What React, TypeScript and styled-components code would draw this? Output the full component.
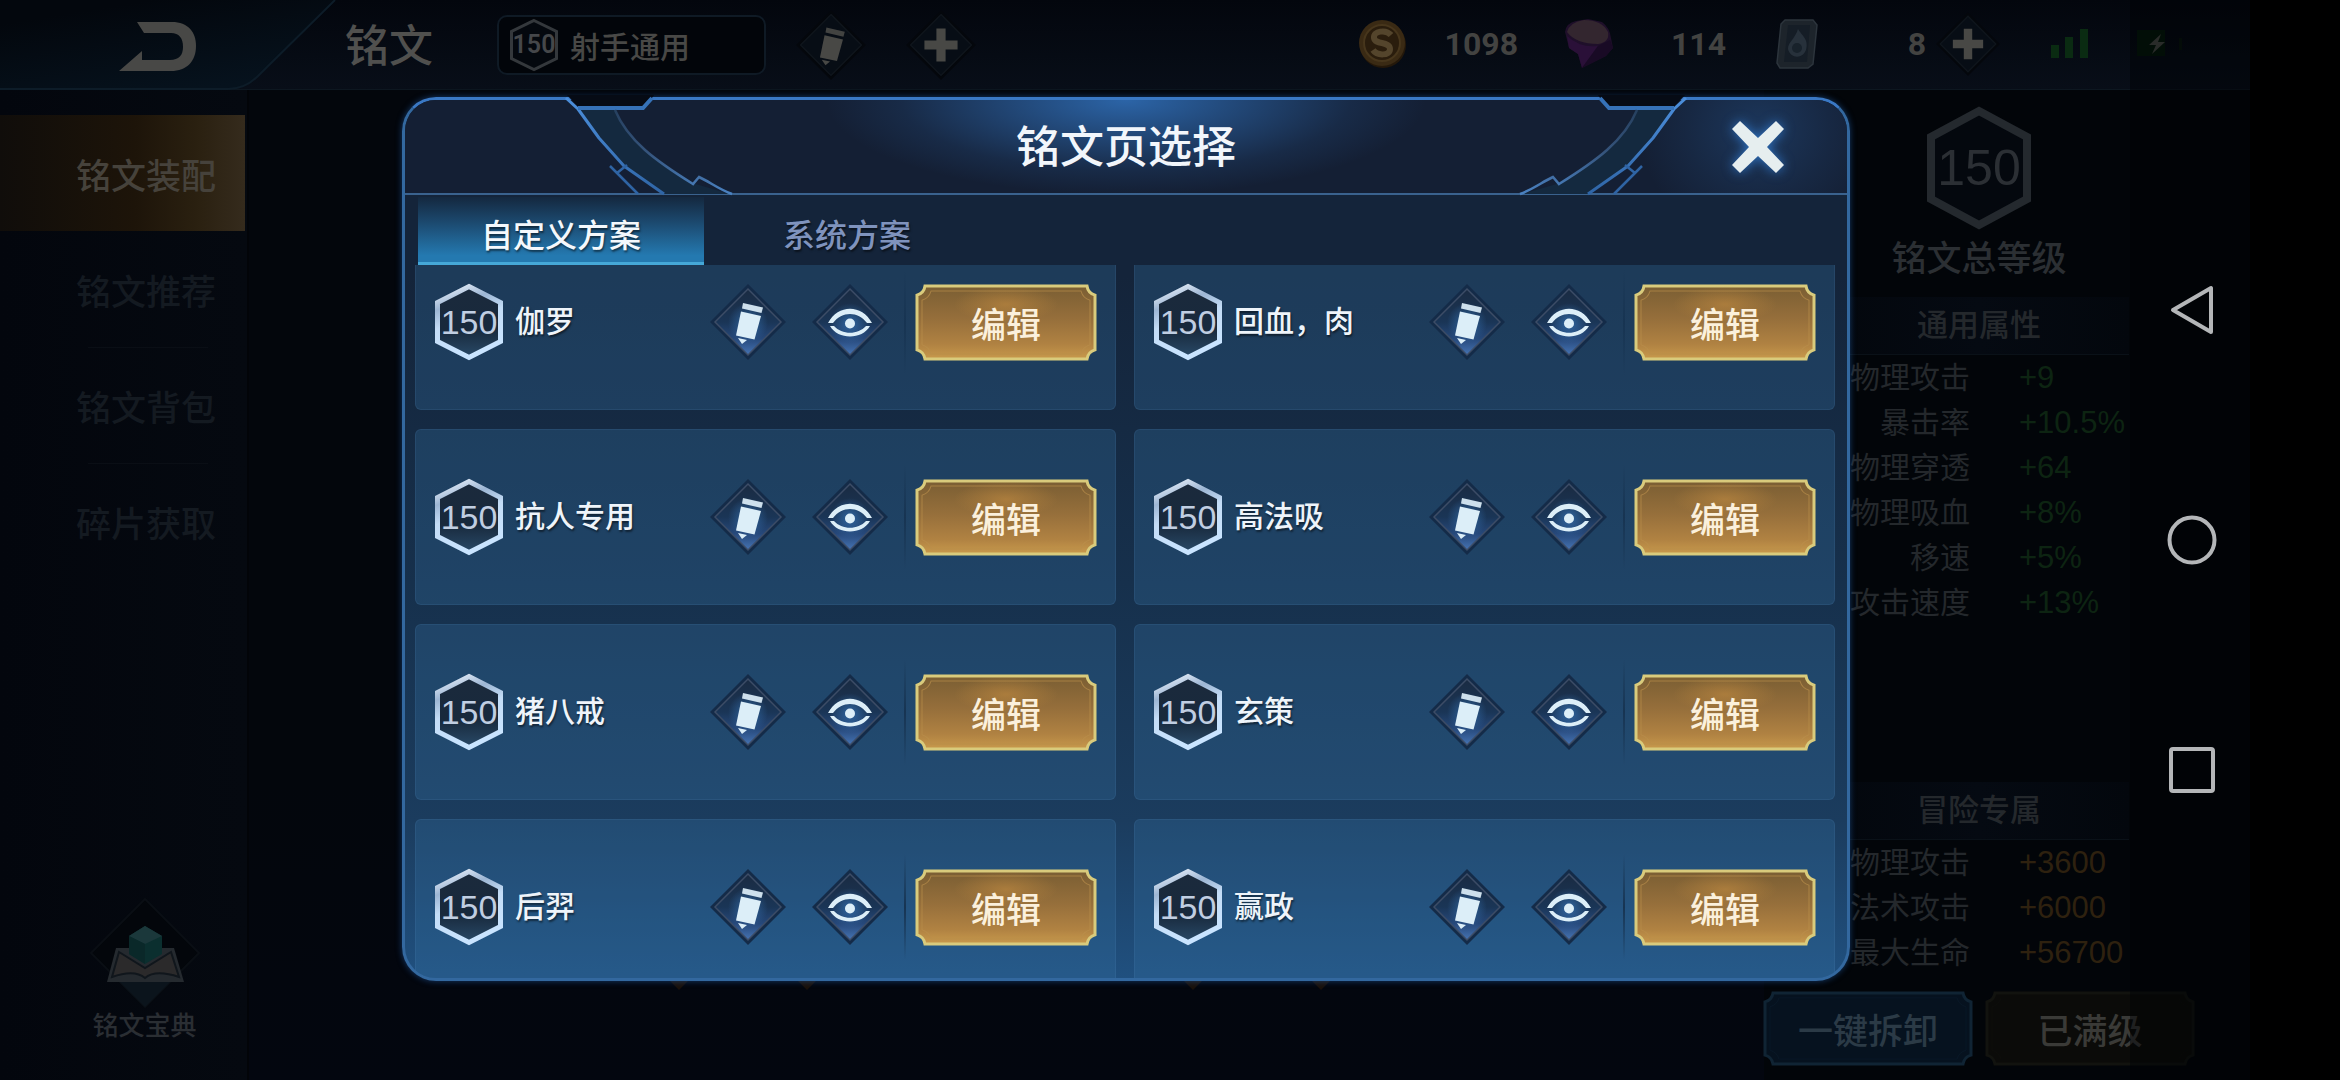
import React, { useLayoutEffect, useRef } from "react";
import styled, { createGlobalStyle } from "styled-components";

const GlobalStyle = createGlobalStyle`
  * { box-sizing: border-box; }
  html, body, #root { margin: 0; min-height: 100%; }
  body {
    background: #000;
    font-family: "Liberation Sans", "Noto Sans CJK SC", sans-serif;
    overflow: hidden;
  }
  button { font: inherit; color: inherit; background: none; border: 0; padding: 0; cursor: pointer; }
  h1, h2, p, ul { margin: 0; padding: 0; font-weight: 500; }
  ul { list-style: none; }
  svg { display: block; }
`;

/* ---------- page ---------- */

const Screen = styled.div`
  position: relative;
  min-height: 100vh;
  padding-right: 90px;
  background: #000;
`;

const Game = styled.div`
  display: flex;
  flex-direction: column;
  height: 100vh;
  min-height: 1000px;
  background: #03060c;
`;

const TopBar = styled.header`
  display: flex;
  align-items: center;
  flex: none;
  height: 90px;
  padding-right: 67px;
  background: linear-gradient(#03060d, #080e18);
  border-bottom: 1px solid #0d1720;
  color: #484846;
`;

const BackButton = styled.button`
  flex: none;
  width: 345px;
  height: 90px;
`;

const PageTitle = styled.h1`
  width: 152px;
  padding-top: 4px;
  font-size: 44px;
  line-height: 60px;
  color: #50504e;
`;

const PageSelect = styled.button`
  display: flex;
  align-items: center;
  gap: 12px;
  width: 269px;
  height: 60px;
  padding: 0 11px;
  margin-right: 30px;
  background: #02050a;
  border: 2px solid #0f1a25;
  border-radius: 10px;
  font-size: 30px;
  font-weight: 500;
`;

const Tools = styled.div`
  display: flex;
  gap: 40px;
`;

const Wallet = styled.div`
  display: flex;
  align-items: center;
  margin-left: auto;
  padding-bottom: 2px;
  font-family: Roboto, "Liberation Sans", sans-serif;
  font-size: 32px;
  font-weight: 700;
  line-height: 40px;
  color: #434341;
`;

const Amount = styled.span<{ $width: number }>`
  width: ${(p) => p.$width}px;
  text-align: right;
`;

const AddButton = styled.button`
  margin-left: 10px;
`;

const Status = styled.div`
  display: flex;
  align-items: center;
  gap: 48px;
  margin-left: 51px;
`;

const Main = styled.main`
  display: flex;
  flex: 1;
  min-height: 0;
`;

const Sidebar = styled.nav`
  display: flex;
  flex-direction: column;
  justify-content: space-between;
  width: 249px;
  padding: 25px 2px 36px 0;
  background: linear-gradient(90deg, #03060d, #050910);
  border-right: 2px solid #020408;
`;

const SideItem = styled.li<{ $active?: boolean }>`
  height: 116px;
  background: ${(p) =>
    p.$active ? "linear-gradient(90deg, #100d0a, #1d1409 55%, #2a2010 80%, #352b1d)" : "none"};
  color: ${(p) => (p.$active ? "#46423b" : "#141a21")};

  button {
    width: 100%;
    height: 100%;
    padding-right: 29px;
    text-align: right;
    font-size: 35px;
    font-weight: 500;
  }

  & + & + & {
    background: linear-gradient(#0a0e15, #0a0e15) 88px 0 / 120px 1px no-repeat;
  }
`;

const Codex = styled.button`
  display: flex;
  flex-direction: column;
  align-items: center;
  align-self: center;
  margin-left: 44px;
  font-size: 26px;
  line-height: 36px;
  font-weight: 500;
  color: #2a2e33;
`;

const Stage = styled.section`
  display: flex;
  flex: 1;
  align-items: flex-end;
  justify-content: space-between;
  padding: 0 431px 88px 418px;
  background: linear-gradient(#03060c 70%, #03060f);
`;

const SlotPair = styled.div`
  display: flex;
  gap: 104px;
`;

const Stats = styled.aside`
  display: flex;
  flex-direction: column;
  align-items: flex-end;
  width: 486px;
  padding: 16px 0 14px;
  background: #020509;
  color: #24282c;
`;

const StatBlock = styled.section<{ $push?: boolean }>`
  display: flex;
  flex-direction: column;
  align-items: center;
  width: 300px;
  margin-right: 121px;
  margin-top: ${(p) => (p.$push ? "auto" : "0")};
`;

const TotalLabel = styled.p`
  margin: 9px 0 18px;
  font-size: 35px;
  line-height: 40px;
  color: #2b2f33;
`;

const StatTitle = styled.h2`
  width: 100%;
  height: 58px;
  border-bottom: 1px solid #0a1118;
  background: linear-gradient(90deg, #03070d, #050a12 50%, #03070d);
  text-align: center;
  font-size: 31px;
  line-height: 58px;
`;

const StatTable = styled.table<{ $color: string }>`
  width: 100%;
  border-collapse: collapse;
  line-height: 45px;

  th {
    width: 141px;
    padding: 0;
    font-size: 30px;
    font-weight: 400;
    text-align: right;
    white-space: nowrap;
    color: #24282c;
  }

  td {
    padding: 0 0 0 49px;
    font-size: 31px;
    color: ${(p) => p.$color};
  }
`;

const Actions = styled.div`
  display: flex;
  gap: 12px;
  margin: 16px 55px 0 0;
`;

const FrameButton = styled.button<{ $size: "small" | "large"; $color: string }>`
  position: relative;
  width: ${(p) => (p.$size === "small" ? 182 : 210)}px;
  height: ${(p) => (p.$size === "small" ? 77 : 75)}px;
  font-size: 35px;
  font-weight: 500;
  color: ${(p) => p.$color};

  svg {
    position: absolute;
    inset: 0;
    width: 100%;
    height: 100%;
  }

  span { position: relative; }
`;

/* ---------- dialog ---------- */

const Backdrop = styled.div`
  position: absolute;
  inset: 0 90px 0 0;
  display: flex;
  justify-content: center;
  padding: 97px 0 99px 2px;
`;

const Dialog = styled.section`
  display: flex;
  flex-direction: column;
  width: min(1448px, 94%);
  border: 3px solid #33689f;
  border-top-color: #3a78c4;
  border-radius: 34px;
  background: linear-gradient(#14243a 20%, #16304c 55%, #1b3c5e 82%, #20507f);
  box-shadow: 0 0 6px rgba(40, 110, 200, 0.5);
`;

const DialogHead = styled.header`
  position: relative;
  display: grid;
  place-items: center;
  flex: none;
  height: 95px;
  border-bottom: 2px solid #3a628e;
  border-radius: 31px 31px 0 0;
  background:
    radial-gradient(
      ellipse 300px 95px at 50% 0,
      rgba(46, 108, 180, 0.9),
      rgba(46, 108, 180, 0.55) 35%,
      rgba(46, 108, 180, 0.15) 75%,
      rgba(46, 108, 180, 0)
    ),
    radial-gradient(
      ellipse 120px 110px at calc(100% - 88px) 30px,
      rgba(40, 90, 150, 0.4),
      rgba(40, 90, 150, 0.15) 60%,
      rgba(40, 90, 150, 0)
    ),
    #141f34;
`;

const DialogTitle = styled.h2`
  padding-top: 2px;
  font-size: 44px;
  line-height: 60px;
  color: #f2f6fb;
`;

const Ornament = styled.svg<{ $side: "left" | "right" }>`
  position: absolute;
  top: -5px;
  ${(p) => p.$side}: 145px;
  transform: ${(p) => (p.$side === "right" ? "scaleX(-1)" : "none")};
`;

const CloseButton = styled.button`
  position: absolute;
  top: 17px;
  right: 59px;
  filter: drop-shadow(0 0 6px #2f74c4);
`;

const Tabs = styled.div`
  display: flex;
  flex: none;
  height: 70px;
  padding: 2px 13px 0;
`;

const Tab = styled.button<{ $active?: boolean }>`
  width: 286px;
  padding-top: 12px;
  font-size: 32px;
  line-height: 48px;
  font-weight: 500;
  color: ${(p) => (p.$active ? "#f4f8fc" : "#7f93bd")};
  background: ${(p) => (p.$active ? "linear-gradient(#14283f, #1c4a70 40%, #2479b0 90%)" : "none")};
  border-bottom: 3px solid ${(p) => (p.$active ? "#45a8d8" : "transparent")};
  text-shadow: 1px 2px 2px rgba(0, 0, 0, 0.5);
`;

const PlanList = styled.ul`
  display: grid;
  grid-template-columns: 1fr 1fr;
  grid-auto-rows: 176px;
  gap: 19px 18px;
  flex: 1;
  min-height: 0;
  padding: 0 12px 0 10px;
  overflow-y: auto;
  scrollbar-width: none;
  border-radius: 0 0 31px 31px;
`;

const PlanCard = styled.li`
  display: flex;
  align-items: center;
  padding: 0 18px 0 19px;
  background: rgba(54, 112, 162, 0.3);
  border: 1px solid rgba(90, 140, 190, 0.14);
  border-radius: 6px;
`;

const PlanName = styled.span`
  flex: 1;
  padding-left: 12px;
  font-size: 30px;
  font-weight: 500;
  line-height: 40px;
  white-space: nowrap;
  color: #eef4fa;
  text-shadow: 1px 2px 2px rgba(0, 0, 0, 0.5);
`;

const CardTools = styled.div`
  display: flex;
  align-items: center;
  gap: 26px;
  padding-right: 18px;
  margin-right: 9px;
  height: 106px;
  background: linear-gradient(rgba(16, 34, 56, 0), #173452 50%, rgba(16, 34, 56, 0)) right / 2px 100% no-repeat;
`;

const LevelBadge = styled.span<{ $w: number; $h: number; $font: number }>`
  position: relative;
  display: grid;
  place-items: center;
  flex: none;
  width: ${(p) => p.$w}px;
  height: ${(p) => p.$h}px;
  font-size: ${(p) => p.$font}px;

  svg { position: absolute; inset: 0; }
  span { position: relative; }
`;

const BadgeText = styled.span<{ $tone: Tone }>`
  font-family: ${(p) => (p.$tone === "bar" ? 'Roboto, "Liberation Sans"' : '"Liberation Sans"')}, sans-serif;
  font-weight: ${(p) => (p.$tone === "bar" ? 600 : 400)};
  color: ${(p) => (p.$tone === "card" ? "#c0cee2" : p.$tone === "bar" ? "#45474a" : "#2b2f34")};
`;

const SystemNav = styled.nav`
  position: absolute;
  inset: 0 90px 0 auto;
  display: flex;
  flex-direction: column;
  align-items: center;
  justify-content: center;
  gap: 180px;
  width: 120px;
  padding-left: 3px;
  background: rgba(0, 2, 5, 0.45);

  button { height: 50px; }
`;

/* ---------- drawings ---------- */

type Tone = "card" | "bar" | "total";

function Level({ tone }: { tone: Tone }) {
  const [w, h, font, line] =
    tone === "card" ? [68, 78, 34, 5] : tone === "bar" ? [48, 54, 25, 3] : [104, 124, 50, 8];
  const i = line / 2;
  const q = h * 0.25;
  const points = `${w / 2},${i + 1} ${w - i},${q} ${w - i},${h - q} ${w / 2},${h - i - 1} ${i},${h - q} ${i},${q}`;
  return (
    <LevelBadge $w={w} $h={h} $font={font}>
      <svg width={w} height={h} aria-hidden="true">
        <defs>
          <linearGradient id="hexEdge" x1="0" y1="0" x2="0.3" y2="1">
            <stop offset="0" stopColor="#f3f8ff" />
            <stop offset="0.3" stopColor="#9db6d4" />
            <stop offset="0.55" stopColor="#c3dcf6" />
            <stop offset="1" stopColor="#c9e4ff" />
          </linearGradient>
          <linearGradient id="hexFill" x1="0" y1="0" x2="0" y2="1">
            <stop offset="0" stopColor="#1b2a3c" />
            <stop offset="0.6" stopColor="#18293c" />
            <stop offset="1" stopColor="#294a68" />
          </linearGradient>
        </defs>
        <polygon
          points={points}
          fill={tone === "card" ? "url(#hexFill)" : "#04080e"}
          stroke={tone === "card" ? "url(#hexEdge)" : tone === "bar" ? "#34383c" : "#24292e"}
          strokeWidth={line}
        />
      </svg>
      <BadgeText $tone={tone}>150</BadgeText>
    </LevelBadge>
  );
}

function Diamond({ icon, dim, size = 76 }: { icon: "pencil" | "eye" | "plus"; dim?: boolean; size?: number }) {
  const ink = dim ? "#484845" : "#dceef8";
  return (
    <svg width={size} height={size} viewBox="0 0 76 76" aria-hidden="true">
      <defs>
        <linearGradient id="diamondFill" x1="0" y1="0" x2="0" y2="1">
          <stop offset="0" stopColor="#1a2b42" />
          <stop offset="0.5" stopColor="#1a3556" />
          <stop offset="0.75" stopColor="#26487a" />
          <stop offset="1" stopColor="#4674b4" />
        </linearGradient>
        <radialGradient id="diamondGlow">
          <stop offset="0" stopColor="#3878bc" stopOpacity="0.7" />
          <stop offset="1" stopColor="#3878bc" stopOpacity="0" />
        </radialGradient>
      </defs>
      <path d="M38 0 76 38 38 76 0 38Z" fill={dim ? "#04070c" : "#142b48"} />
      <path
        d="M38 5 71 38 38 71 5 38Z"
        fill={dim ? "#070d15" : "url(#diamondFill)"}
        stroke={dim ? "#0f151c" : "#3c4c66"}
        strokeWidth="1.5"
      />
      {!dim && <circle cx="38" cy="39" r="20" fill="url(#diamondGlow)" />}
      {icon === "pencil" && (
        <g fill={ink}>
          <path d="M33 19 53 23.500 51.500 29 32 24.500Z" opacity="0.92" />
          <path d="M31 27.500 51 32 44.500 55.500 26 51.500Z" />
          <path d="M28 54 37 56 32 60Z" />
        </g>
      )}
      {icon === "eye" && (
        <g>
          <path d="M16 39C26 20 50 20 60 39L55 39C46 27 30 27 21 39Z" fill={ink} />
          <path d="M18 42C26 56 50 56 58 42L54 42C46 51 30 51 22 42Z" fill={ink} />
          <circle cx="38" cy="39.500" r="5" fill={ink} />
        </g>
      )}
      {icon === "plus" && <path d="M33 20h10v13h13v10h-13v13h-10v-13h-13v-10h13z" fill={ink} />}
    </svg>
  );
}

type Skin = "gold" | "blue" | "dark";

const skins: Record<Skin, [string, string, string]> = {
  gold: ["url(#goldFill)", "#d9cb7c", "#b98f4c"],
  blue: ["#06121f", "#102434", "#0a1a2a"],
  dark: ["#0b0b09", "#12130f", "#0e0e0b"],
};

function ButtonFrame({ skin, w }: { skin: Skin; w: number }) {
  const [fill, edge, inner] = skins[skin];
  return (
    <svg viewBox={`0 0 ${w} 76`} preserveAspectRatio="none" aria-hidden="true">
      <defs>
        <linearGradient id="goldFill" x1="0" y1="0" x2="0" y2="1">
          <stop offset="0" stopColor="#7a5e33" />
          <stop offset="0.45" stopColor="#966f3b" />
          <stop offset="0.8" stopColor="#b08242" />
          <stop offset="1" stopColor="#c8994c" />
        </linearGradient>
        <radialGradient id="goldShine">
          <stop offset="0" stopColor="#c08a40" stopOpacity="0.6" />
          <stop offset="1" stopColor="#c08a40" stopOpacity="0" />
        </radialGradient>
      </defs>
      <path
        d={`M10 2H${w - 10}Q${w - 9} 9 ${w - 2} 11V65Q${w - 9} 67 ${w - 10} 74H10Q9 67 2 65V11Q9 9 10 2Z`}
        fill={fill}
        stroke={edge}
        strokeWidth="3"
      />
      {skin === "gold" && <ellipse cx={w / 2} cy="20" rx="52" ry="18" fill="url(#goldShine)" />}
      <path
        d={`M16 7H${w - 16}Q${w - 14} 14 ${w - 7} 16V60Q${w - 14} 62 ${w - 16} 69H16Q14 62 7 60V16Q14 14 16 7Z`}
        fill="none"
        stroke={inner}
        strokeWidth="1"
        opacity="0.7"
      />
    </svg>
  );
}

function HeadOrnament({ side }: { side: "left" | "right" }) {
  return (
    <Ornament $side={side} width="190" height="101" viewBox="0 0 190 101" fill="none" aria-hidden="true">
      <defs>
        <linearGradient id="innerRail" x1="0" y1="0" x2="0" y2="1">
          <stop offset="0" stopColor="#26405f" />
          <stop offset="0.5" stopColor="#35547c" />
          <stop offset="1" stopColor="#4a82c2" />
        </linearGradient>
        <linearGradient id="outerRail" x1="0" y1="0" x2="0" y2="1">
          <stop offset="0" stopColor="#4c8fdc" />
          <stop offset="1" stopColor="#2f65a6" />
        </linearGradient>
      </defs>
      <path d="M17 0H104L95 13H29Z" fill="#060b15" />
      <path d="M28 14H65C78 48 106 66 142 88L180 99H114L74 71Z" fill="#14293f" />
      <path d="M16 3 28 14 49 43 74 71 114 99" stroke="url(#outerRail)" strokeWidth="3" strokeLinejoin="round" />
      <path d="M28 13H93L102 3" stroke="#3672b8" strokeWidth="4" />
      <path d="M65 15C78 46 106 66 143 89L149 82C160 87 168 94 182 99" stroke="url(#innerRail)" strokeWidth="2.500" />
      <path d="M60 71 67 78 88 99M67 78 77 70" stroke="#2f64a4" strokeWidth="2.500" />
    </Ornament>
  );
}

const BackArt = () => (
  <svg width="345" height="90" aria-hidden="true">
    <defs>
      <linearGradient id="backFill" x1="0" y1="0" x2="0.6" y2="1">
        <stop offset="0.2" stopColor="#03070d" />
        <stop offset="1" stopColor="#06121d" />
      </linearGradient>
    </defs>
    <path d="M0 0H335L258 76Q245 89 228 89H0Z" fill="url(#backFill)" />
    <path d="M335 0 258 76Q245 89 228 89H0" fill="none" stroke="#0d1c28" strokeWidth="2" />
    <path
      d="M137 22H172C188 22 196 32 196 46C196 61 187 71 171 71H119L142 51V60H170C179 60 183 55 183 47C183 38 179 33 171 33H144Z"
      fill="#484846"
    />
  </svg>
);

const CoinArt = () => (
  <svg width="50" height="50" viewBox="0 0 50 50" aria-hidden="true">
    <circle cx="25" cy="26" r="23" fill="#24180a" />
    <circle cx="24" cy="24" r="23" fill="#3a2a14" />
    <circle cx="24" cy="24" r="18" fill="#2a1d0d" stroke="#47361c" strokeWidth="2" />
    <path
      d="M33 16C28 10 15 12 16 19C17 26 32 22 32 30C32 37 19 37 15 31"
      fill="none"
      stroke="#54452c"
      strokeWidth="6"
    />
  </svg>
);

const GemArt = () => (
  <svg width="50" height="52" viewBox="0 0 50 52" aria-hidden="true">
    <path d="M1 14Q2 5 12 3L24 1 38 4Q46 10 47 20L49 30 42 38 18 50 14 36 5 30Z" fill="#1f0f2a" />
    <path d="M3 14Q6 4 20 2Q38 2 44 14Q46 24 34 26Q12 26 3 14Z" fill="#33262f" />
    <path d="M3 18Q16 30 34 28L18 50 14 36 5 30Z" fill="#2a1038" />
    <path d="M34 28 46 22 49 30 42 38 18 50Z" fill="#190a25" />
  </svg>
);

const TokenArt = () => (
  <svg width="42" height="50" viewBox="0 0 42 50" aria-hidden="true">
    <path d="M9 1H37L41 6 37 45 32 49H4L1 44 5 5Z" fill="#1d242b" stroke="#2c343c" strokeWidth="1.500" />
    <path d="M12 6H34L31 43H8Z" fill="#151d26" />
    <path d="M22 10C26 17 33 20 30 31C26 41 14 39 12 30C12 23 19 20 22 10Z" fill="#27313b" />
    <circle cx="21" cy="29" r="5" fill="#18222b" />
  </svg>
);

const SignalArt = () => (
  <svg width="38" height="30" aria-hidden="true">
    <path d="M0 16h8v13h-8zM14 8h8v21h-8zM29 0h8v29h-8z" fill="#0a2b12" />
  </svg>
);

const BatteryArt = () => (
  <svg width="46" height="28" aria-hidden="true">
    <path d="M0 0h28v26h-28z" fill="#05180a" />
    <path d="M42 8h3v12h-3z" fill="#08140b" />
    <path d="M24 4 12 15h7l-4 9 13-12h-7z" fill="#4b4d48" />
  </svg>
);

const CodexArt = () => (
  <svg width="110" height="110" viewBox="0 0 110 110" aria-hidden="true">
    <path d="M55 1 109 55 55 109 1 55Z" fill="#03060b" stroke="#0a0e14" strokeWidth="2" />
    <path d="M28 82H82L55 109Z" fill="#0b141c" />
    <path d="M26 50H84L94 84H17Z" fill="#252a2f" />
    <path d="M29 54 55 70 81 54 89 79C74 74 62 74 55 80C48 74 36 74 22 79Z" fill="#2b2a2b" stroke="#10161c" strokeWidth="2" />
    <path d="M55 28 72 38V56L55 66 39 56V38Z" fill="#0b2f2f" />
    <path d="M55 28 72 38 55 46 39 38Z" fill="#1b383b" />
    <path d="M55 46V66L39 56V38Z" fill="#0a2829" />
  </svg>
);

const SlotTip = () => (
  <svg width="24" height="12" aria-hidden="true">
    <path d="M2 0H22L12 10Z" fill="#1a110b" />
  </svg>
);

/* ---------- data ---------- */

const plans = ["伽罗", "回血，肉", "抗人专用", "高法吸", "猪八戒", "玄策", "后羿", "赢政"];
const sections = ["铭文装配", "铭文推荐", "铭文背包", "碎片获取"];
const common = [
  ["物理攻击", "+9"],
  ["暴击率", "+10.5%"],
  ["物理穿透", "+64"],
  ["物理吸血", "+8%"],
  ["移速", "+5%"],
  ["攻击速度", "+13%"],
];
const adventure = [
  ["物理攻击", "+3600"],
  ["法术攻击", "+6000"],
  ["最大生命", "+56700"],
];

function StatRows({ rows, color }: { rows: string[][]; color: string }) {
  return (
    <StatTable $color={color}>
      <tbody>
        {rows.map(([name, value]) => (
          <tr key={name}>
            <th scope="row">{name}</th>
            <td>{value}</td>
          </tr>
        ))}
      </tbody>
    </StatTable>
  );
}

function PlanDialog() {
  const list = useRef<HTMLUListElement>(null);
  useLayoutEffect(() => {
    if (list.current) list.current.scrollTop = 31;
  }, []);

  return (
    <Backdrop>
      <Dialog role="dialog" aria-labelledby="dialog-title">
        <DialogHead>
          <HeadOrnament side="left" />
          <HeadOrnament side="right" />
          <DialogTitle id="dialog-title">铭文页选择</DialogTitle>
          <CloseButton aria-label="关闭">
            <svg width="60" height="60" aria-hidden="true">
              <path
                d="M12 4 30 21 48 4 56 12 39 30 56 48 48 56 30 39 12 56 4 48 21 30 4 12Z"
                fill="#e6eeef"
              />
            </svg>
          </CloseButton>
        </DialogHead>
        <Tabs role="tablist">
          <Tab role="tab" aria-selected="true" $active>自定义方案</Tab>
          <Tab role="tab" aria-selected="false">系统方案</Tab>
        </Tabs>
        <PlanList ref={list}>
          {plans.map((name) => (
            <PlanCard key={name}>
              <Level tone="card" />
              <PlanName>{name}</PlanName>
              <CardTools>
                <button aria-label={`重命名 ${name}`}><Diamond icon="pencil" /></button>
                <button aria-label={`查看 ${name}`}><Diamond icon="eye" /></button>
              </CardTools>
              <FrameButton $size="small" $color="#fbf0dc">
                <ButtonFrame skin="gold" w={182} />
                <span>编辑</span>
              </FrameButton>
            </PlanCard>
          ))}
        </PlanList>
      </Dialog>
    </Backdrop>
  );
}

export default function App() {
  return (
    <Screen>
      <GlobalStyle />
      <Game>
        <TopBar>
          <BackButton aria-label="返回"><BackArt /></BackButton>
          <PageTitle>铭文</PageTitle>
          <PageSelect>
            <Level tone="bar" />
            <span>射手通用</span>
          </PageSelect>
          <Tools>
            <button aria-label="重命名"><Diamond icon="pencil" dim size={70} /></button>
            <button aria-label="新增"><Diamond icon="plus" dim size={70} /></button>
          </Tools>
          <Wallet>
            <CoinArt />
            <Amount $width={110}>1098</Amount>
            <Amount $width={46} />
            <GemArt />
            <Amount $width={112}>114</Amount>
            <Amount $width={50} />
            <TokenArt />
            <Amount $width={108}>8</Amount>
            <AddButton aria-label="充值"><Diamond icon="plus" dim size={64} /></AddButton>
            <Status>
              <SignalArt />
              <BatteryArt />
            </Status>
          </Wallet>
        </TopBar>
        <Main>
          <Sidebar>
            <ul>
              {sections.map((name, i) => (
                <SideItem key={name} $active={i === 0}>
                  <button>{name}</button>
                </SideItem>
              ))}
            </ul>
            <Codex>
              <CodexArt />
              铭文宝典
            </Codex>
          </Sidebar>
          <Stage>
            <SlotPair><SlotTip /><SlotTip /></SlotPair>
            <SlotPair><SlotTip /><SlotTip /></SlotPair>
          </Stage>
          <Stats>
            <StatBlock>
              <Level tone="total" />
              <TotalLabel>铭文总等级</TotalLabel>
              <StatTitle>通用属性</StatTitle>
              <StatRows rows={common} color="#0d2412" />
            </StatBlock>
            <StatBlock $push>
              <StatTitle>冒险专属</StatTitle>
              <StatRows rows={adventure} color="#2e210f" />
            </StatBlock>
            <Actions>
              <FrameButton $size="large" $color="#2b3a46">
                <ButtonFrame skin="blue" w={210} />
                <span>一键拆卸</span>
              </FrameButton>
              <FrameButton $size="large" $color="#3a3a37">
                <ButtonFrame skin="dark" w={210} />
                <span>已满级</span>
              </FrameButton>
            </Actions>
          </Stats>
        </Main>
      </Game>
      <PlanDialog />
      <SystemNav>
        <button aria-label="后退">
          <svg width="46" height="50" aria-hidden="true">
            <path d="M4 25 42 3V47Z" fill="none" stroke="#b4b6b8" strokeWidth="4" strokeLinejoin="round" />
          </svg>
        </button>
        <button aria-label="主屏幕">
          <svg width="50" height="50" aria-hidden="true">
            <circle cx="25" cy="25" r="22.500" fill="none" stroke="#b4b6b8" strokeWidth="4" />
          </svg>
        </button>
        <button aria-label="最近任务">
          <svg width="50" height="50" aria-hidden="true">
            <rect x="4" y="4" width="42" height="42" rx="2" fill="none" stroke="#b4b6b8" strokeWidth="4" />
          </svg>
        </button>
      </SystemNav>
    </Screen>
  );
}
